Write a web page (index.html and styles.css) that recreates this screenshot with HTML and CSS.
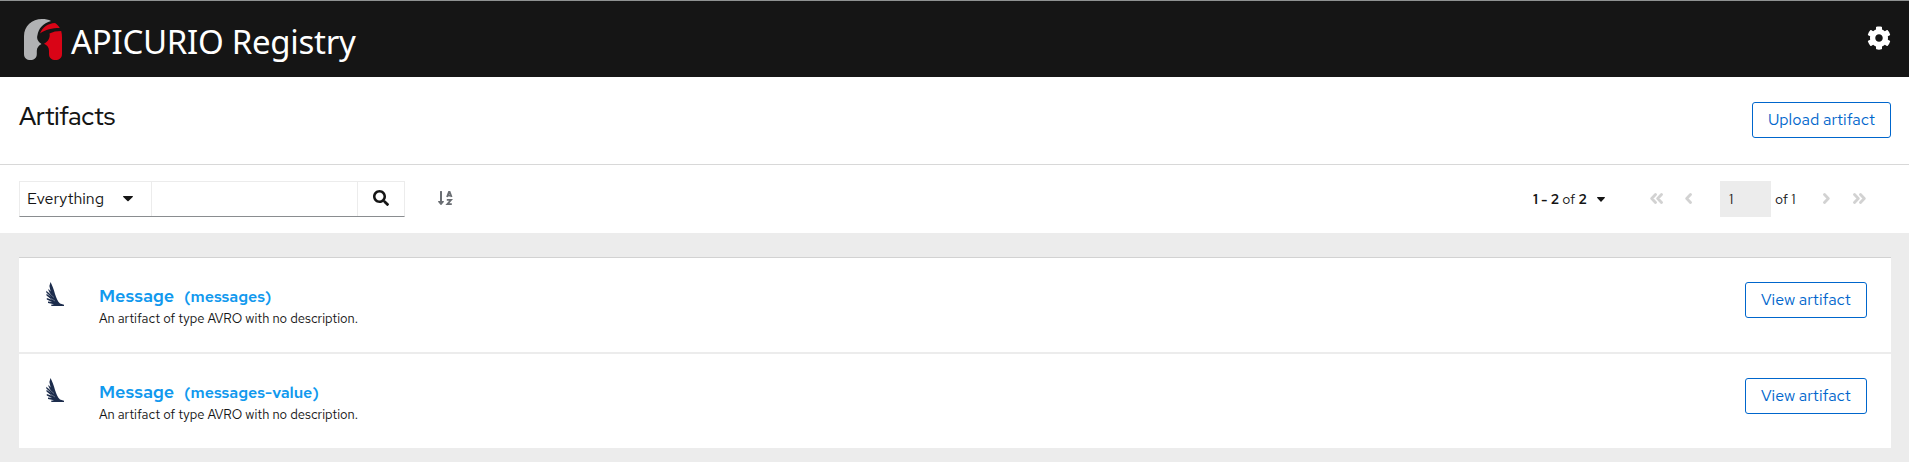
FILE: index.html
```html
<!DOCTYPE html>
<html lang="en">
<head>
<meta charset="utf-8">
<title>Apicurio Registry</title>
<link rel="stylesheet" href="styles.css">
</head>
<body>
<header class="masthead">
  <a class="brand">
    <svg class="brand-mark" viewBox="0 0 38 41" width="38" height="41">
      <path fill="#b1b2b4" d="M0 17C0 7 8 0 18 0c3.500 0 6.500.5 9 2C19 4.500 14.500 9.500 13.500 16c-1 3 0 6.500 4 9-3 1.500-4.700 4-4.700 7v3c0 4-2.800 6-6.400 6S0 39 0 35z"/>
      <path fill="#d90416" d="M16 14.500C18.500 8.500 24 4.200 31 4c2 1.200 3.600 3 4.800 5C28 9 21.500 10.500 16 14.500zM25.500 14.500C29 12.800 32.500 12 37.200 12c.6 2 .8 4 .8 6v17c0 4-3 6-6.500 6S25 39 25 35v-3c0-3.500-1.800-5.800-5-7.200 3.500-1.800 6.500-5.800 5.500-10.300z"/>
    </svg>
    <span class="brand-name">APICURIO Registry</span>
  </a>
  <svg class="cog" viewBox="0 0 512 512" width="24" height="24"><path fill="#fff" d="M487.400 315.700l-42.600-24.600c4.300-23.200 4.300-47 0-70.200l42.600-24.600c4.900-2.800 7.100-8.600 5.500-14-11.100-35.600-30-67.800-54.700-94.600-3.800-4.100-10-5.100-14.800-2.300L380.800 110c-17.900-15.400-38.500-27.300-60.800-35.100V25.800c0-5.600-3.900-10.500-9.400-11.700-36.700-8.200-74.300-7.800-109.200 0-5.500 1.200-9.400 6.100-9.400 11.700V75c-22.200 7.900-42.800 19.800-60.800 35.100L88.700 85.500c-4.900-2.800-11-1.900-14.800 2.300-24.700 26.700-43.600 58.900-54.700 94.600-1.700 5.400.6 11.200 5.500 14L67.300 221c-4.300 23.200-4.300 47 0 70.200l-42.600 24.600c-4.900 2.800-7.100 8.600-5.500 14 11.100 35.600 30 67.800 54.700 94.600 3.800 4.100 10 5.100 14.800 2.300l42.600-24.600c17.900 15.400 38.500 27.300 60.800 35.100v49.200c0 5.600 3.900 10.500 9.400 11.700 36.700 8.200 74.300 7.800 109.200 0 5.500-1.200 9.400-6.100 9.400-11.700v-49.200c22.200-7.900 42.800-19.800 60.800-35.100l42.600 24.600c4.900 2.800 11 1.900 14.800-2.300 24.700-26.700 43.600-58.900 54.700-94.600 1.500-5.500-.7-11.300-5.600-14.100zM256 336c-44.100 0-80-35.900-80-80s35.900-80 80-80 80 35.900 80 80-35.900 80-80 80z"/></svg>
</header>
<section class="page-title">
  <h1>Artifacts</h1>
  <button class="btn btn-upload">Upload artifact</button>
</section>
<section class="toolbar">
  <div class="filter">
    <button class="filter-type"><span class="filter-label">Everything</span><svg width="10" height="6" viewBox="0 0 10 6"><path fill="#151515" d="M.5 0h9q.8.4.2 1L5.600 5.100Q5 5.600 4.400 5.100L.3 1Q-.3.400.5 0z"/></svg></button>
    <input class="filter-input" type="text" aria-label="Filter">
    <button class="filter-search" aria-label="Search"><svg viewBox="0 0 512 512" width="16" height="16"><path fill="#151515" d="M505 442.700L405.300 343c-4.500-4.500-10.600-7-17-7H372c27.600-35.300 44-79.700 44-128C416 93.100 322.900 0 208 0S0 93.100 0 208s93.100 208 208 208c48.300 0 92.700-16.400 128-44v16.300c0 6.400 2.500 12.500 7 17l99.700 99.700c9.400 9.400 24.600 9.400 33.900 0l28.300-28.300c9.400-9.400 9.400-24.600.1-34zM208 336c-70.700 0-128-57.200-128-128 0-70.700 57.200-128 128-128 70.700 0 128 57.200 128 128 0 70.700-57.200 128-128 128z"/></svg></button>
  </div>
  <svg class="sort" width="15" height="14" viewBox="0 0 15 14">
    <path fill="#6a6e73" d="M2 .5Q2 0 2.500 0h1Q4 0 4 .5V10h1.500q.7.200.3.900L3.500 13.700q-.5.500-1 0L.2 10.900Q-.2 10.200.5 10H2z"/>
    <path fill="none" stroke="#6a6e73" stroke-width="1.800" d="M9 6l2-5.200h.6l2 5.200M9.600 4.500h3.600M8.800 8.900h4.300L9.400 13.100h4.400"/>
  </svg>
  <div class="pager">
    <button class="pager-total"><span><b>1 - 2</b> of <b>2</b></span><svg width="8" height="5" viewBox="0 0 8 5"><path fill="#151515" d="M.5 0h7q.8.300.2.900L4.500 4.500Q4 5 3.500 4.500L.3.900Q-.3.300.5 0z"/></svg></button>
    <svg class="nav nav-first" width="13" height="11" viewBox="0 0 13 11"><path d="M5.500 1.500L1.700 5.500l3.800 4M11.500 1.500L7.700 5.500l3.800 4"/></svg>
    <svg class="nav nav-prev" width="7" height="11" viewBox="0 0 7 11"><path d="M5.500 1.500L1.700 5.500l3.800 4"/></svg>
    <span class="page-box">1</span>
    <span class="page-of">of 1</span>
    <svg class="nav nav-next" width="7" height="11" viewBox="0 0 7 11"><path d="M1.500 1.500l3.800 4-3.800 4"/></svg>
    <svg class="nav nav-last" width="13" height="11" viewBox="0 0 13 11"><path d="M1.500 1.500l3.800 4-3.800 4M7.500 1.500l3.800 4-3.800 4"/></svg>
  </div>
</section>
<main class="content">
  <ul class="artifacts">
    <li class="artifact">
      <svg class="avro" width="18" height="24" viewBox="0 0 18 24"><path fill="#1c2c4c" d="M4.500 0C6 3 8 7.500 9 12c1.500 4 2.500 7.500 5 9.500l4 1.300V24H5.500L5 22.800 8 22.300 2 21v-1.500l4 .4L.8 17.500v-1.600l5 1.800-5.300-4.300v-1.600l4.600 3.200L.3 10.500V8.800l4.400 3.700L2.500 8.500V6.800L4.600 9.400 3.400 4z"/><path stroke="#fff" stroke-width=".3" fill="none" d="M4 12l4 3.500M5 16.500l4 2.500"/></svg>
      <div class="info">
        <div class="heading"><a class="name">Message</a><a class="id">(messages)</a></div>
        <p class="desc">An artifact of type AVRO with no description.</p>
      </div>
      <button class="btn btn-view">View artifact</button>
    </li>
    <li class="artifact">
      <svg class="avro" width="18" height="24" viewBox="0 0 18 24"><path fill="#1c2c4c" d="M4.500 0C6 3 8 7.500 9 12c1.500 4 2.500 7.500 5 9.500l4 1.300V24H5.500L5 22.800 8 22.300 2 21v-1.500l4 .4L.8 17.500v-1.600l5 1.800-5.300-4.300v-1.600l4.600 3.200L.3 10.500V8.800l4.400 3.700L2.500 8.500V6.800L4.600 9.400 3.400 4z"/><path stroke="#fff" stroke-width=".3" fill="none" d="M4 12l4 3.500M5 16.500l4 2.500"/></svg>
      <div class="info">
        <div class="heading"><a class="name">Message</a><a class="id">(messages-value)</a></div>
        <p class="desc">An artifact of type AVRO with no description.</p>
      </div>
      <button class="btn btn-view">View artifact</button>
    </li>
  </ul>
</main>
</body>
</html>
```
FILE: styles.css
```css
* { box-sizing: border-box; margin: 0; padding: 0; }
body { height: 462px; overflow: hidden; background: #ececec; color: #151515; font: 16px/24px "Red Hat Text", Lato, sans-serif; }
button { font: inherit; color: inherit; background: none; border: 0; }
svg { display: block; flex: none; }

.masthead { display: flex; justify-content: space-between; height: 77px; padding: 0 18px 0 24px; background: #151515; border-top: 1px solid #8f9292; }
.brand { display: flex; }
.brand-mark { margin-top: 18px; }
.brand-name { margin: 17px 0 0 9px; color: #fff; font: 33px/48px "Noto Sans", sans-serif; letter-spacing: -.28px; white-space: nowrap; }
.cog { margin-top: 25px; }

.page-title { display: flex; justify-content: space-between; height: 88px; padding: 25px 18px 0 19px; background: #fff; border-bottom: 1px solid #d8d8d8; }
h1 { margin-top: -1px; font-family: "Red Hat Display", "Red Hat Text", Lato, sans-serif; font-size: 25px; line-height: 31px; font-weight: 500; letter-spacing: -.15px; }
.btn { height: 36px; color: #06c; border: 1px solid #06c; border-radius: 3px; white-space: nowrap; }
.btn-upload { width: 139px; }
.btn-view { width: 122px; margin-left: auto; }

.toolbar { display: flex; height: 68px; padding: 16px 43px 0 19px; background: #fff; }
.filter { display: flex; width: 386px; height: 36px; border: 1px solid #ececec; border-bottom-color: #8a8d90; }
.filter-type { display: flex; align-items: center; width: 132px; padding-left: 7px; border-right: 1px solid #ececec; }
.filter-label { width: 96px; text-align: left; }
.filter-input { width: 206px; border: 0; border-right: 1px solid #ececec; font: inherit; outline: none; }
.filter-search { flex: 1; display: flex; justify-content: center; padding-top: 8px; }
.sort { margin: 10px 0 0 33px; }
.pager { display: flex; height: 36px; align-items: center; margin-left: auto; font-size: 14px; }
.pager-total { display: flex; align-items: center; }
.pager-total span { width: 64px; text-align: left; white-space: nowrap; }
.pager-total b { font-weight: 600; }
.nav { margin-top: -2px; fill: none; stroke: #d2d2d2; stroke-width: 2.800; stroke-linejoin: round; stroke-linecap: round; }
.nav-first { margin-left: 45px; }
.nav-prev { margin-left: 22px; }
.page-box { width: 51px; height: 36px; margin-left: 28px; padding-left: 9px; background: #ececec; line-height: 36px; }
.page-of { width: 25px; margin: 0 23px 0 4px; white-space: nowrap; }
.nav-last { margin-left: 23px; }

.content { padding: 24px 18px 0 19px; }
.artifacts { list-style: none; border-top: 1px solid #d2d2d2; }
.artifact { display: flex; height: 94px; padding: 24px 24px 0 27px; background: #fff; }
.artifact + .artifact { margin-top: 2px; }
.info { padding: 2px 0 0 35px; }
.heading { display: flex; align-items: baseline; color: #1199ee; font-weight: 600; line-height: 24px; }
.name { width: 85px; font-size: 18px; letter-spacing: -.1px; }
.id { font-size: 16px; letter-spacing: -.1px; }
.desc { margin-top: -1px; font-size: 13px; line-height: 21px; white-space: nowrap; }
```
